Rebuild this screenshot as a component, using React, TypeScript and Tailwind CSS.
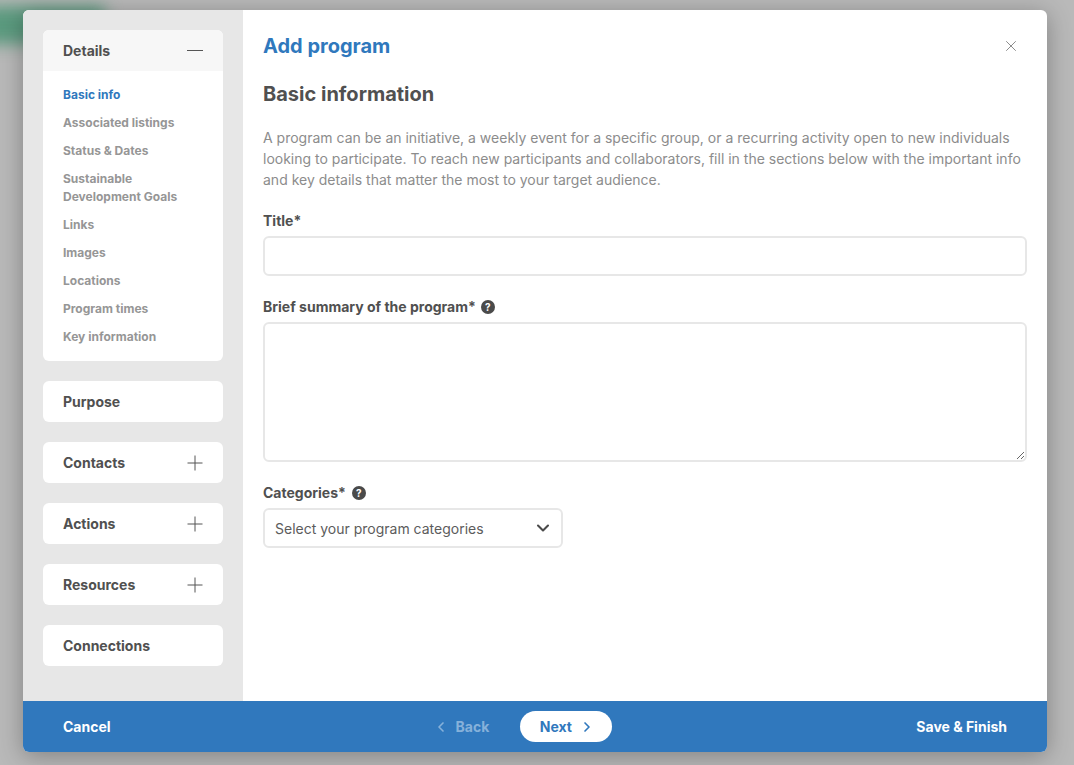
import { ChevronDown, ChevronLeft, ChevronRight, X } from "lucide-react";

const subLinks = [
  "Associated listings",
  "Status & Dates",
  "Sustainable Development Goals",
  "Links",
  "Images",
  "Locations",
  "Program times",
  "Key information",
];

const sections = [
  { name: "Purpose", plus: false },
  { name: "Contacts", plus: true },
  { name: "Actions", plus: true },
  { name: "Resources", plus: true },
  { name: "Connections", plus: false },
];

function Plus() {
  return (
    <svg width="16" height="16" viewBox="0 0 16 16" className="text-[#555]">
      <path d="M8 0.5v15M0.5 8h15" stroke="currentColor" strokeWidth="1" fill="none" />
    </svg>
  );
}

function Help() {
  return (
    <span className="flex h-[14px] w-[14px] items-center justify-center rounded-full bg-[#4a4a4a] text-[10px] leading-none font-bold text-white">
      ?
    </span>
  );
}

export default function App() {
  return (
    <div className="relative h-[765px] w-full overflow-hidden bg-[#b9b9b9] pt-[10px] pl-[23px] font-['Inter',sans-serif]">
      {/* blurred page behind the modal */}
      <div className="absolute top-[6px] left-[-20px] h-[38px] w-[125px] bg-[#5a9a7e] blur-[8px]" />

      <div className="relative flex h-[742px] w-[1024px] flex-col overflow-hidden rounded-[6px] bg-white shadow-[0_4px_24px_rgba(0,0,0,0.3)]">
        <div className="flex min-h-0 flex-1">
          {/* sidebar */}
          <aside className="flex w-[220px] flex-col gap-5 bg-[#e7e7e7] p-5">
            <div className="overflow-hidden rounded-[6px] bg-white">
              <div className="flex h-[41px] items-center justify-between bg-[#f7f7f7] pr-5 pl-5">
                <span className="text-sm font-bold text-[#505050]">Details</span>
                <span className="h-px w-4 bg-[#555]" />
              </div>
              <ul className="flex flex-col gap-[10px] px-5 pt-[15px] pb-[15px] text-xs leading-[18px] font-bold text-[#969696]">
                <li className="text-[#2f78bd]">Basic info</li>
                {subLinks.map((l) => (
                  <li key={l}>{l}</li>
                ))}
              </ul>
            </div>
            {sections.map((s) => (
              <div
                key={s.name}
                className="flex h-[41px] items-center justify-between rounded-[6px] bg-white px-5"
              >
                <span className="text-sm font-bold text-[#505050]">{s.name}</span>
                {s.plus && <Plus />}
              </div>
            ))}
          </aside>

          {/* form */}
          <main className="min-w-0 flex-1 px-5 pt-[22px]">
            <div className="flex items-center justify-between">
              <h1 className="text-xl leading-[28px] font-bold text-[#2f78bd]">Add program</h1>
              <X size={18} strokeWidth={1} className="mr-[7px] text-[#666]" />
            </div>
            <h2 className="mt-[20px] text-xl leading-[28px] font-bold text-[#505050]">
              Basic information
            </h2>
            <p className="mt-[19px] text-sm leading-[21px] text-[#8c8c8c]">
              A program can be an initiative, a weekly event for a specific group, or a recurring
              activity open to new individuals looking to participate. To reach new participants and
              collaborators, fill in the sections below with the important info and key details that
              matter the most to your target audience.
            </p>
            <label className="mt-[20px] block text-sm leading-[21px] font-bold text-[#505050]">
              Title*
            </label>
            <input
              type="text"
              className="mt-[5px] block h-[40px] w-full rounded-[6px] border-2 border-[#e7e7e7] px-3 outline-none"
            />
            <label className="mt-[20px] flex items-center gap-[5px] text-sm leading-[21px] font-bold text-[#505050]">
              Brief summary of the program* <Help />
            </label>
            <textarea className="mt-[5px] block h-[140px] w-full rounded-[6px] border-2 border-[#e7e7e7] px-3 outline-none" />
            <label className="mt-[20px] flex items-center gap-[6px] text-sm leading-[21px] font-bold text-[#505050]">
              Categories* <Help />
            </label>
            <div className="mt-[5px] flex h-[40px] w-[300px] items-center justify-between rounded-[6px] border-2 border-[#e7e7e7] pr-[8px] pl-[10px] text-sm text-[#5c5c5c]">
              <span className="pt-[2px]">Select your program categories</span>
              <ChevronDown size={20} strokeWidth={2.5} className="text-[#4a4a4a]" />
            </div>
          </main>
        </div>

        {/* footer */}
        <footer className="relative flex h-[51px] items-center justify-between bg-[#3078bd] px-10 text-sm font-bold text-white">
          <span>Cancel</span>
          <div className="flex items-center gap-[31px] pl-[18px]">
            <span className="flex items-center gap-[7px] text-[#86b1da]">
              <ChevronLeft size={16} strokeWidth={2.5} />
              Back
            </span>
            <span className="flex h-[31px] w-[92px] items-center justify-center gap-[7px] rounded-full bg-white pl-[2px] text-[#3078bd]">
              Next
              <ChevronRight size={16} strokeWidth={2.5} />
            </span>
          </div>
          <span>Save &amp; Finish</span>
        </footer>
      </div>
    </div>
  );
}
